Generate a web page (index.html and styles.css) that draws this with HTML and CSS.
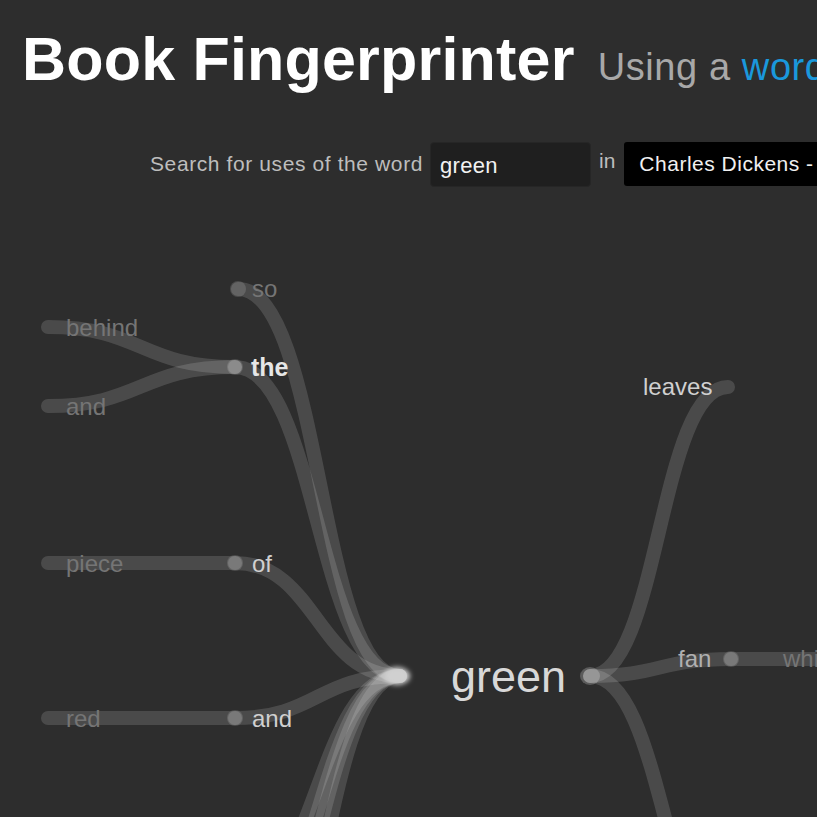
FILE: index.html
```html
<!DOCTYPE html>
<html>
<head>
<meta charset="utf-8">
<link rel="stylesheet" href="styles.css">
</head>
<body>
<div class="page">
  <header class="header">
    <h1 class="title">Book Fingerprinter</h1>
    <span class="subtitle">Using a <a class="link" href="#">word tree</a></span>
  </header>
  <form class="search">
    <label class="label">Search for uses of the word</label>
    <input class="word" type="text" value="green">
    <span class="in">in</span>
    <div class="select">Charles Dickens - Great Expectations</div>
  </form>
  <svg class="tree" width="817" height="617" viewBox="0 200 817 617">
    <defs>
      <filter id="glow" x="-50%" y="-50%" width="200%" height="200%">
        <feGaussianBlur stdDeviation="2.5"/>
      </filter>
    </defs>
    <g class="links">
      <path d="M48,327 C141,327 141,367 235,367"/>
      <path d="M48,406 C141,406 141,367 235,367"/>
      <path d="M238,289 C322,289 318,676 400,676"/>
      <path d="M235,367 C317,367 317,676 400,676"/>
      <path d="M48,563 L235,563"/>
      <path d="M235,563 C317,563 317,676 400,676"/>
      <path d="M48,718 L235,718"/>
      <path d="M235,718 C317,718 317,676 400,676"/>
      <path d="M400,676 C317,676 317,900 235,900"/>
      <path d="M400,676 C317,676 317,950 235,950"/>
      <path d="M400,676 C317,676 317,1000 235,1000"/>
      <path d="M400,676 C317,676 317,1100 235,1100"/>
      <path d="M590,676 C659,676 659,387 728,387"/>
      <path d="M590,676 C660,676 660,659 731,659"/>
      <path d="M731,659 L860,659"/>
      <path d="M590,676 C665,676 665,960 740,960"/>
    </g>
    <g class="dots">
      <circle cx="238" cy="289" r="8"/>
      <circle cx="235" cy="367" r="8"/>
      <circle cx="235" cy="563" r="8"/>
      <circle cx="235" cy="718" r="8"/>
      <circle cx="731" cy="659" r="8"/>
    </g>
    <ellipse class="hub" cx="397" cy="676" rx="13" ry="9" filter="url(#glow)"/>
    <ellipse class="hub2" cx="590" cy="676" rx="10" ry="9"/>
    <g class="words">
      <text class="w outer" x="252" y="297">so</text>
      <text class="w outer" x="66" y="336">behind</text>
      <text class="w strong" x="251" y="376">the</text>
      <text class="w outer" x="66" y="415">and</text>
      <text class="w outer" x="66" y="572">piece</text>
      <text class="w inner" x="252" y="572">of</text>
      <text class="w outer" x="66" y="727">red</text>
      <text class="w inner" x="252" y="727">and</text>
      <text class="center" x="451" y="692">green</text>
      <text class="w inner" x="643" y="395">leaves</text>
      <text class="w mid" x="678" y="667">fan</text>
      <text class="w outer" x="783" y="667">which</text>
    </g>
  </svg>
</div>
</body>
</html>
```

FILE: styles.css
```css
html, body {
  margin: 0;
  padding: 0;
  background: #2d2d2d;
  overflow: hidden;
}
.page {
  width: 817px;
  height: 817px;
  overflow: hidden;
  white-space: nowrap;
  font-family: "Liberation Sans", Arial, sans-serif;
}
.header {
  display: flex;
  align-items: baseline;
  padding: 23px 0 0 22px;
  height: 95px;
  box-sizing: border-box;
}
.title {
  margin: 0;
  font-size: 61px;
  font-weight: bold;
  color: #ffffff;
  line-height: 72px;
  letter-spacing: 0.2px;
}
.subtitle {
  margin-left: 23px;
  font-size: 38px;
  letter-spacing: 0.6px;
  color: #a8a8a8;
}
.link {
  color: #1a98dc;
  text-decoration: none;
}
.search {
  display: flex;
  align-items: center;
  margin: 46px 0 0 150px;
  height: 46px;
}
.label {
  font-size: 21px;
  letter-spacing: 0.6px;
  color: #bdbdbd;
}
.word {
  margin-left: 7px;
  width: 161px;
  height: 45px;
  box-sizing: border-box;
  background: #1f1f1f;
  border: 1px solid #262626;
  border-radius: 4px;
  color: #f2f2f2;
  font-family: "Liberation Sans", Arial, sans-serif;
  font-size: 22px;
  letter-spacing: 0.3px;
  padding: 4px 9px 0;
  outline: none;
}
.in {
  margin-left: 8px;
  font-size: 21px;
  color: #bdbdbd;
  align-self: flex-start;
  margin-top: 8px;
}
.select {
  margin-left: 9px;
  height: 44px;
  width: 300px;
  background: #000000;
  border-radius: 3px;
  color: #f0f0f0;
  font-size: 21px;
  letter-spacing: 0.5px;
  display: flex;
  align-items: center;
  padding-left: 15px;
  box-sizing: border-box;
}
.tree {
  display: block;
  margin-top: 13px;
}
.links path {
  fill: none;
  stroke: rgba(255, 255, 255, 0.14);
  stroke-width: 14;
  stroke-linecap: round;
}
.dots circle {
  fill: rgba(255, 255, 255, 0.14);
}
.hub {
  fill: #d0d0d0;
}
.hub2 {
  fill: rgba(255, 255, 255, 0.22);
}
.w {
  font-family: "Liberation Sans", Arial, sans-serif;
  font-size: 24px;
}
.outer {
  fill: #757575;
}
.inner {
  fill: #d0d0d0;
}
.mid {
  fill: #b0b0b0;
}
.strong {
  fill: #e6e6e6;
  font-weight: bold;
  font-size: 25px;
}
.center {
  font-family: "Liberation Sans", Arial, sans-serif;
  font-size: 45px;
  fill: #d8d8d8;
}
```
